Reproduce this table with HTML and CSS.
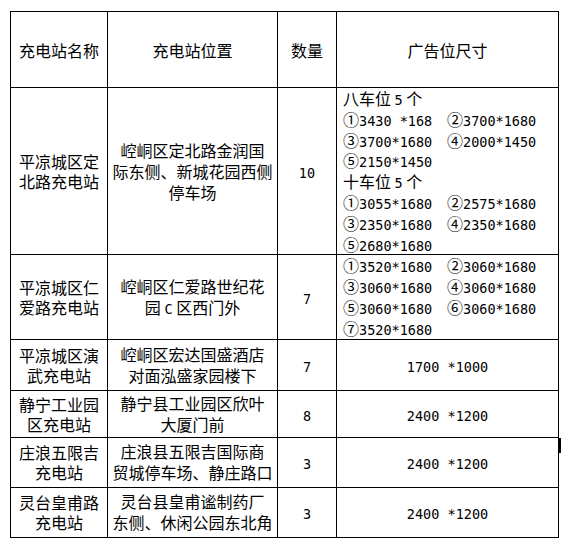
FILE: index.html
```html
<!DOCTYPE html>
<html lang="zh-CN">
<head>
<meta charset="utf-8">
<title>充电站广告位</title>
<link rel="stylesheet" href="styles.css">
</head>
<body>
<div class="page">
<table class="t">
  <colgroup><col class="c1"><col class="c2"><col class="c3"><col class="c4"></colgroup>
  <tr class="rh">
    <td>充电站名称</td><td>充电站位置</td><td>数量</td><td>广告位尺寸</td>
  </tr>
  <tr class="r1">
    <td>平凉城区定<br>北路充电站</td>
    <td class="loc"><span class="k">崆峒</span>区定北路金润国<br>际东侧、新城花园西侧<br>停车场</td>
    <td><span class="n">10</span></td>
    <td class="ad">
      <div class="ads">
        <div class="full">八车位 <span class="n">5</span> 个</div>
        <div>①<span class="n">3430 *168</span></div><div>②<span class="n">3700*1680</span></div>
        <div>③<span class="n">3700*1680</span></div><div>④<span class="n">2000*1450</span></div>
        <div class="full">⑤<span class="n">2150*1450</span></div>
        <div class="full">十车位 <span class="n">5</span> 个</div>
        <div>①<span class="n">3055*1680</span></div><div>②<span class="n">2575*1680</span></div>
        <div>③<span class="n">2350*1680</span></div><div>④<span class="n">2350*1680</span></div>
        <div class="full">⑤<span class="n">2680*1680</span></div>
      </div>
    </td>
  </tr>
  <tr class="r2">
    <td>平凉城区仁<br>爱路充电站</td>
    <td class="loc"><span class="k">崆峒</span>区仁爱路世纪花<br>园 <span class="n">C</span> 区西门外</td>
    <td><span class="n">7</span></td>
    <td class="ad">
      <div class="ads">
        <div>①<span class="n">3520*1680</span></div><div>②<span class="n">3060*1680</span></div>
        <div>③<span class="n">3060*1680</span></div><div>④<span class="n">3060*1680</span></div>
        <div>⑤<span class="n">3060*1680</span></div><div>⑥<span class="n">3060*1680</span></div>
        <div class="full">⑦<span class="n">3520*1680</span></div>
      </div>
    </td>
  </tr>
  <tr class="r3">
    <td>平凉城区演<br>武充电站</td>
    <td class="loc"><span class="k">崆峒</span>区宏达国盛酒店<br>对面泓盛家园楼下</td>
    <td><span class="n">7</span></td>
    <td><span class="n">1700 *1000</span></td>
  </tr>
  <tr class="r4">
    <td>静宁工业园<br>区充电站</td>
    <td class="loc">静宁县工业园区欣叶<br>大厦门前</td>
    <td><span class="n">8</span></td>
    <td><span class="n">2400 *1200</span></td>
  </tr>
  <tr class="r5">
    <td>庄浪五限吉<br>充电站</td>
    <td class="loc">庄浪县五限吉国际商<br>贸城停车场、静庄路口</td>
    <td><span class="n">3</span></td>
    <td class="mark-cell"><span class="n">2400 *1200</span><span class="mark"></span></td>
  </tr>
  <tr class="r6">
    <td>灵台皇甫路<br>充电站</td>
    <td class="loc">灵台县皇甫谧制药厂<br>东侧、休闲公园东北角</td>
    <td><span class="n">3</span></td>
    <td><span class="n">2400 *1200</span></td>
  </tr>
</table>
</div>
</body>
</html>
```

FILE: styles.css
```css
html, body {
  margin: 0;
  padding: 0;
  background: #fff;
  color: #000;
}
.page {
  padding: 11px 0 0 10px;
}
.t {
  border-collapse: collapse;
  table-layout: fixed;
  width: 549px;
  font-family: "Noto Sans CJK SC", "Noto Sans", sans-serif;
  font-size: 16px;
  color: #000;
}
.c1 { width: 97px; }
.c2 { width: 170px; }
.c3 { width: 59px; }
.c4 { width: 222px; }
.t td {
  border: 1px solid #000;
  padding: 0 2px;
  text-align: center;
  vertical-align: middle;
  line-height: 20px;
  white-space: nowrap;
  overflow: visible;
  color: #000;
}
.t td.loc {
  line-height: 21px;
}
.k {
  color: #000;
  font-family: "Noto Sans CJK SC", sans-serif;
}
.rh td { height: 75px; }
.r1 td { height: 166px; }
.r2 td { height: 83px; }
.r3 td { height: 50px; }
.r4 td { height: 46px; }
.r5 td { height: 49px; }
.r6 td { height: 49px; }
.t td.ad {
  text-align: left;
  padding: 0 2px 0 6px;
}
.ads {
  display: grid;
  grid-template-columns: 104px 1fr;
  grid-auto-rows: 20.8px;
  line-height: 20.8px;
}
.ads .full {
  grid-column: 1 / -1;
}
.n {
  font-family: "DejaVu Sans Mono", monospace;
  font-size: 13.5px;
  line-height: 1;
}
.t td.mark-cell {
  position: relative;
}
.mark {
  position: absolute;
  right: -3px;
  top: 0;
  width: 3px;
  height: 15px;
  background: #000;
}
```
